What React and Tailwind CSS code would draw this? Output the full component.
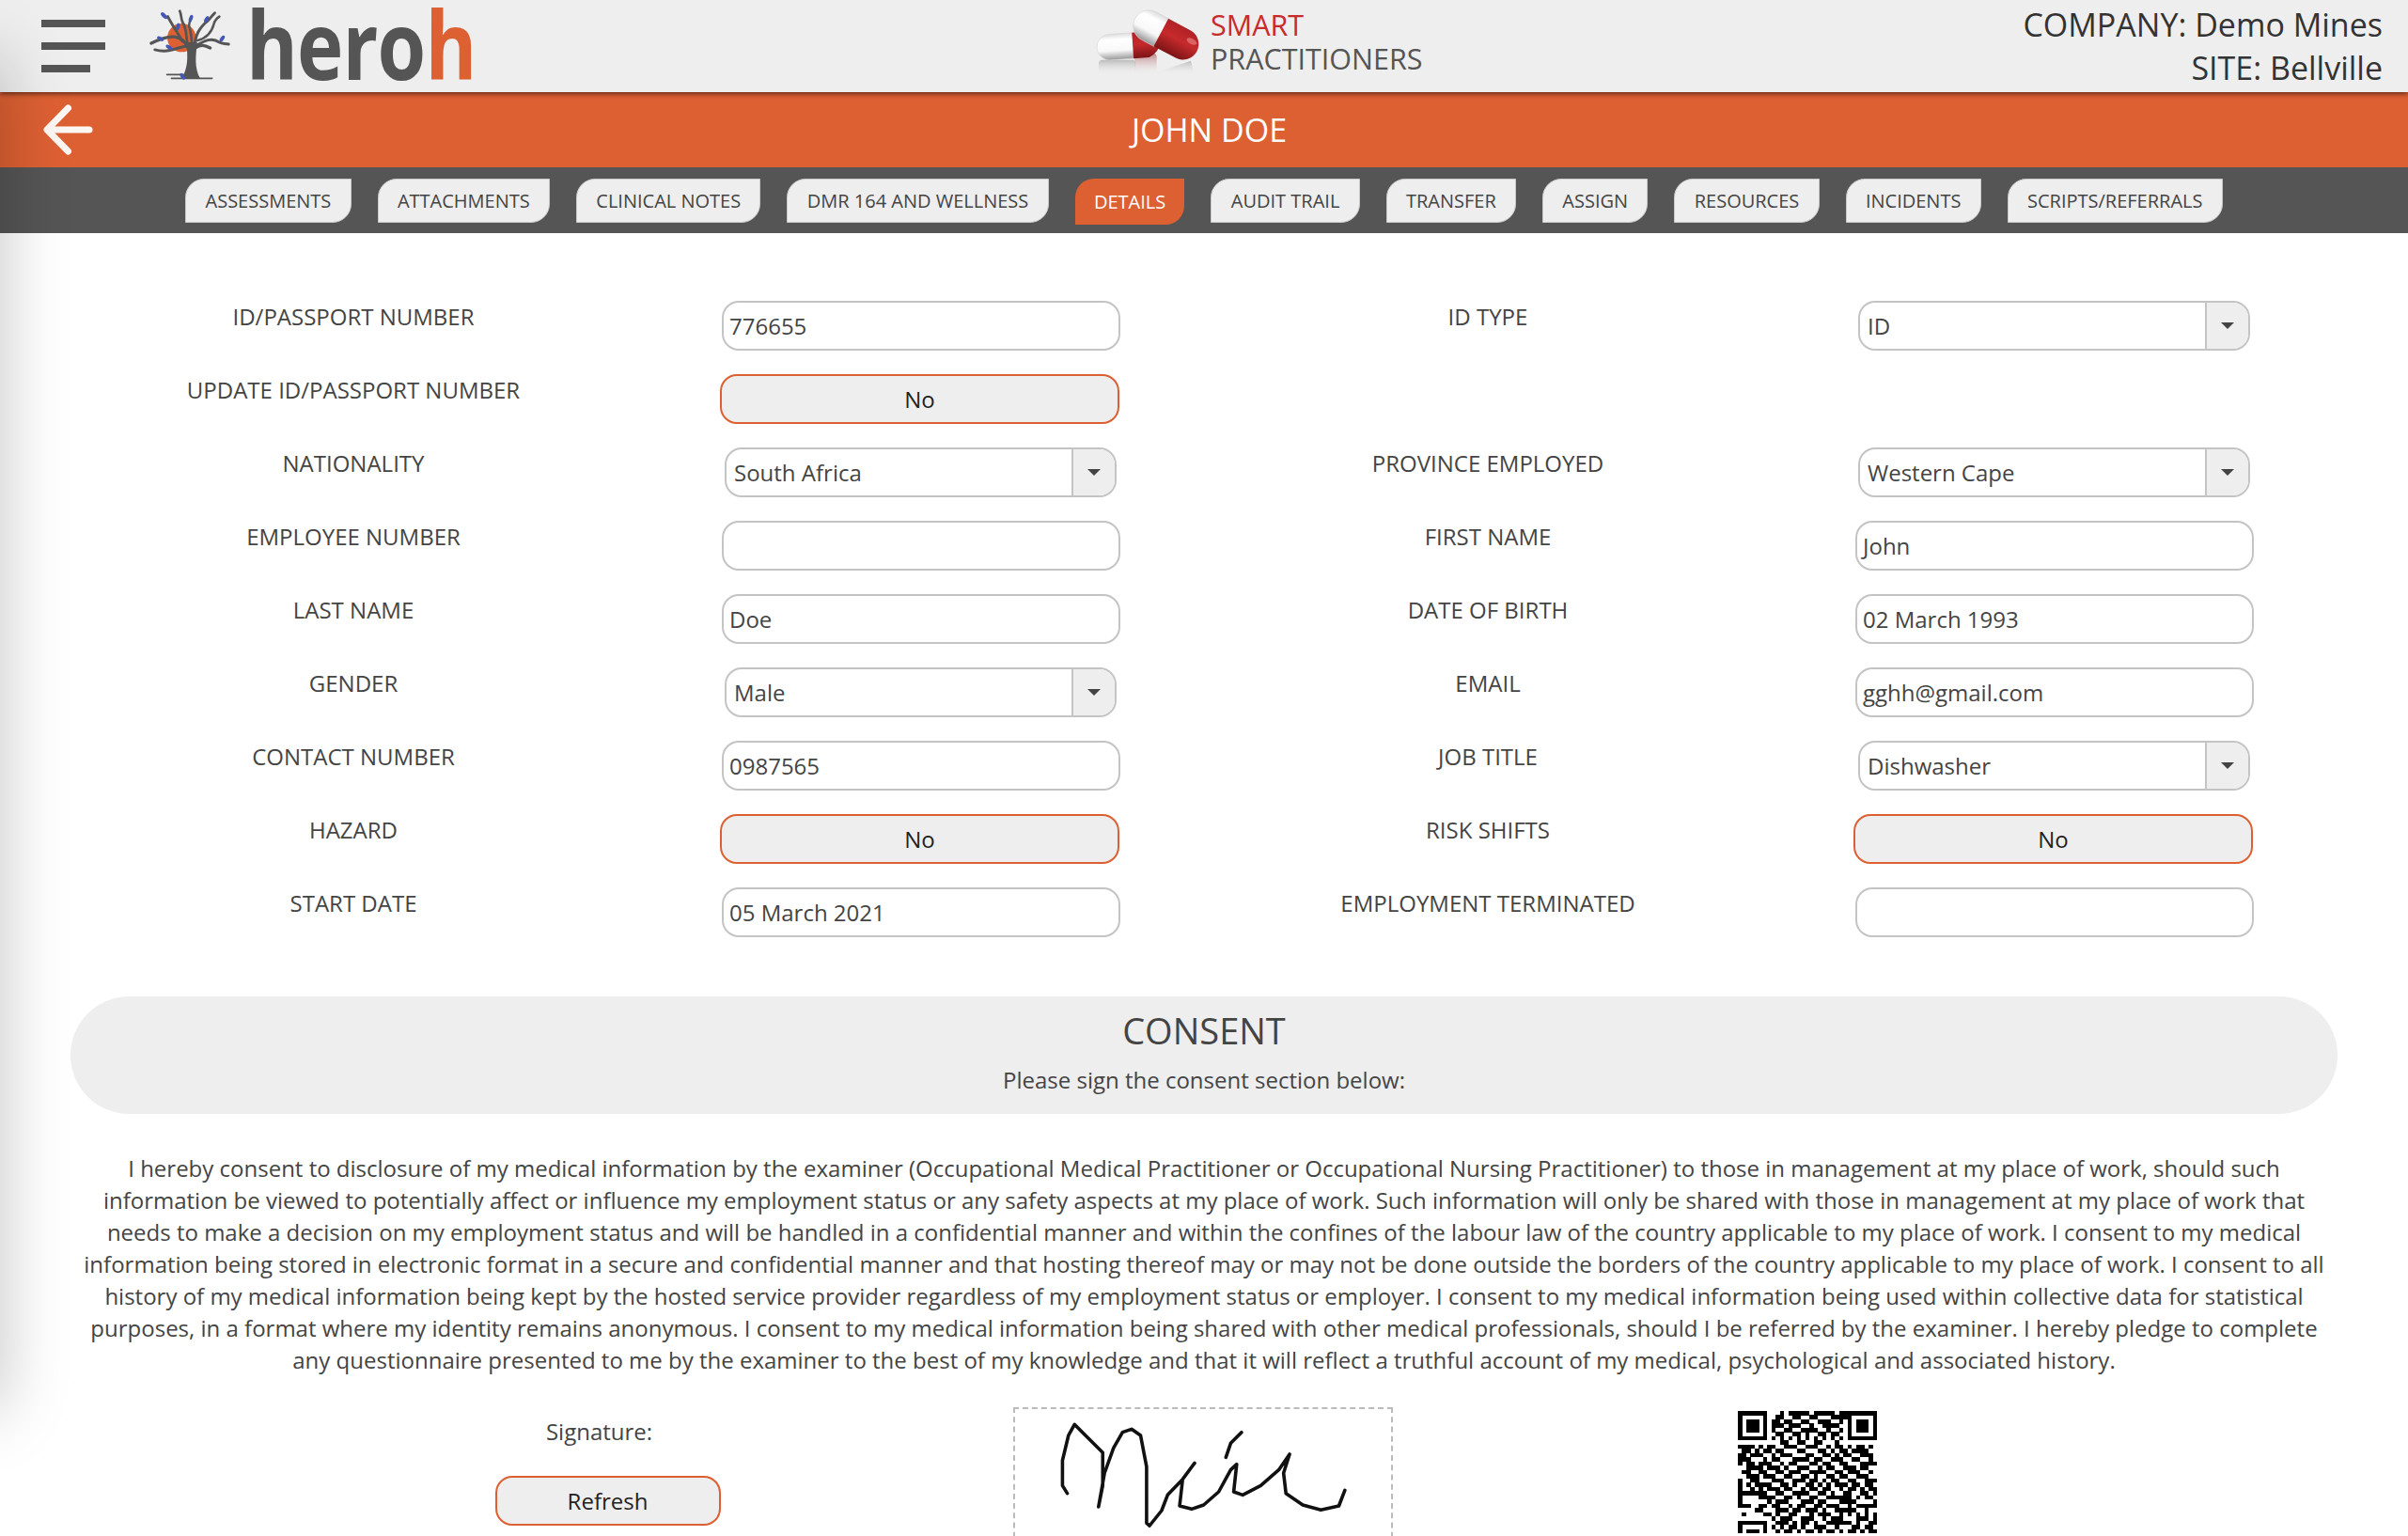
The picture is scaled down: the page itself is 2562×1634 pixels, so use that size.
const ORANGE = '#DD6033';

const tabs = ['ASSESSMENTS','ATTACHMENTS','CLINICAL NOTES','DMR 164 AND WELLNESS','DETAILS','AUDIT TRAIL','TRANSFER','ASSIGN','RESOURCES','INCIDENTS','SCRIPTS/REFERRALS'];

const rows = [
  ['ID/PASSPORT NUMBER',{t:'input',v:'776655'},'ID TYPE',{t:'select',v:'ID'}],
  ['UPDATE ID/PASSPORT NUMBER',{t:'btn',v:'No'},'',null],
  ['NATIONALITY',{t:'select',v:'South Africa'},'PROVINCE EMPLOYED',{t:'select',v:'Western Cape'}],
  ['EMPLOYEE NUMBER',{t:'input',v:''},'FIRST NAME',{t:'input',v:'John'}],
  ['LAST NAME',{t:'input',v:'Doe'},'DATE OF BIRTH',{t:'input',v:'02 March 1993'}],
  ['GENDER',{t:'select',v:'Male'},'EMAIL',{t:'input',v:'gghh@gmail.com'}],
  ['CONTACT NUMBER',{t:'input',v:'0987565'},'JOB TITLE',{t:'select',v:'Dishwasher'}],
  ['HAZARD',{t:'btn',v:'No'},'RISK SHIFTS',{t:'btn',v:'No'}],
  ['START DATE',{t:'input',v:'05 March 2021'},'EMPLOYMENT TERMINATED',{t:'input',v:''}],
];

const consent = [
  'I hereby consent to disclosure of my medical information by the examiner (Occupational Medical Practitioner or Occupational Nursing Practitioner) to those in management at my place of work, should such',
  'information be viewed to potentially affect or influence my employment status or any safety aspects at my place of work. Such information will only be shared with those in management at my place of work that',
  'needs to make a decision on my employment status and will be handled in a confidential manner and within the confines of the labour law of the country applicable to my place of work. I consent to my medical',
  'information being stored in electronic format in a secure and confidential manner and that hosting thereof may or may not be done outside the borders of the country applicable to my place of work. I consent to all',
  'history of my medical information being kept by the hosted service provider regardless of my employment status or employer. I consent to my medical information being used within collective data for statistical',
  'purposes, in a format where my identity remains anonymous. I consent to my medical information being shared with other medical professionals, should I be referred by the examiner. I hereby pledge to complete',
  'any questionnaire presented to me by the examiner to the best of my knowledge and that it will reflect a truthful account of my medical, psychological and associated history.',
];

const qr = [
  '111111100010111110111110111111111'.slice(0,33),
  '100000100110011001100011110100000'.slice(0,26) + '1000001',
  '101110101101100110011100100101110'.slice(0,26) + '1011101',
  '101110101110111001001111000101110'.slice(0,26) + '1011101',
  '101110101001100111100100100101110'.slice(0,26) + '1011101',
  '100000100110011010011011000100000'.slice(0,26) + '1000001',
  '111111101010101010101010100111111'.slice(0,26) + '1111111',
  '000000000011001100110001000000000',
  '111101011001110011100101101011010',
  '011010110110001100011010110111100',
  '110111001011100011001101011001110',
  '111000101100011110110011100110010',
  '101101110010110001101100110001111',
  '001111011101001110010110011101100',
  '011001100110111001111001101110010',
  '001110111001100110100110110011100',
  '100110001110011101101011001100111',
  '101011110011010011010101110110110',
  '100101011101100101101100101101011',
  '111111100110011110011010011001101',
  '100001111001101001100111111010110',
  '100000010111000111011000111100001',
  '111001101100101100110111001011111',
  '000011000111011011101001111100100',
  '010000110100110001011100101010101',
  '000000001011100111001011100011101',
  '111111100111010110100111111010011',
  '100000101010110100111001000110110',
  '101110100101101011010110101101011',
];

function Tree(){
  return (
    <svg viewBox="0 0 130 100" className="w-[130px] h-[98px] shrink-0" fill="none">
      <circle cx="53" cy="41" r="15.5" fill={ORANGE}/>
      <g stroke="#555" strokeLinecap="round" strokeLinejoin="round" fill="none">
        <path d="M61 54C58 46 52 41 45 40C38 39 28 43 20 47" strokeWidth="3.4"/>
        <path d="M54 45C47 33 42 26 38 18" strokeWidth="3"/>
        <path d="M60 50C57 42 60 34 54 24C52 20 53 16 51 12" strokeWidth="2.8"/>
        <path d="M64 50C64 40 63 34 61 28C61 24 63 22 64 18" strokeWidth="2.6"/>
        <path d="M67 50C68 38 72 30 82 22C84 20 86 17 89 14" strokeWidth="3"/>
        <path d="M70 44C78 42 85 38 88 26C89 22 91 20 94 18" strokeWidth="2.6"/>
        <path d="M68 50C78 44 86 40 94 46C97 48 100 47 104 48" strokeWidth="3"/>
        <path d="M58 50C46 52 38 58 24 54" strokeWidth="3"/>
        <path d="M68 52C74 48 78 49 84 52" strokeWidth="3.4"/>
        <path d="M37 81H55" strokeWidth="1.6"/>
        <path d="M42 85H86" strokeWidth="1.8"/>
      </g>
      <path d="M58 46L70 46C68 62 67 74 73 85H53C60 74 60 62 58 46Z" fill="#555"/>
      <g fill="#4457b5">
        <ellipse cx="34" cy="17" rx="2.2" ry="4.5" transform="rotate(-45 34 17)"/>
        <ellipse cx="49" cy="29" rx="2" ry="4" transform="rotate(15 49 29)"/>
        <ellipse cx="30" cy="42" rx="2" ry="4" transform="rotate(-60 30 42)"/>
        <ellipse cx="39" cy="51.500" rx="2" ry="4" transform="rotate(-60 39 51)"/>
        <ellipse cx="63" cy="20" rx="2" ry="4" transform="rotate(20 63 20)"/>
        <ellipse cx="80" cy="21" rx="2" ry="4" transform="rotate(30 80 21)"/>
        <ellipse cx="97" cy="42" rx="2" ry="4" transform="rotate(35 97 42)"/>
        <ellipse cx="54" cy="83" rx="2" ry="4" transform="rotate(-35 54 83)"/>
      </g>
    </svg>
  );
}

function Pills(){
  return (
    <svg viewBox="0 0 130 100" className="w-[130px] h-[98px] shrink-0">
      <defs>
        <linearGradient id="w" x1="0" y1="0" x2="0" y2="1">
          <stop offset="0" stopColor="#dcdcdc"/><stop offset="0.22" stopColor="#ffffff"/><stop offset="0.65" stopColor="#f8f8f8"/><stop offset="1" stopColor="#989898"/>
        </linearGradient>
        <linearGradient id="r" x1="0" y1="0" x2="0" y2="1">
          <stop offset="0" stopColor="#b02125"/><stop offset="0.45" stopColor="#c62a2c"/><stop offset="1" stopColor="#7c1416"/>
        </linearGradient>
        <linearGradient id="fade" x1="0" y1="0" x2="0" y2="1">
          <stop offset="0" stopColor="#999" stopOpacity="0.6"/><stop offset="1" stopColor="#eee" stopOpacity="0"/>
        </linearGradient>
        <linearGradient id="fader" x1="0" y1="0" x2="0" y2="1">
          <stop offset="0" stopColor="#a55" stopOpacity="0.7"/><stop offset="1" stopColor="#eee" stopOpacity="0"/>
        </linearGradient>
      </defs>
      <rect x="18" y="65" width="40" height="16" rx="4" fill="url(#fade)"/>
      <rect x="57" y="58" width="24" height="23" rx="4" fill="url(#fader)"/>
      <path d="M80 79L118 66L122 81H82Z" fill="url(#fade)"/>
      <g transform="rotate(-4 47 50)">
        <path d="M30 36H60V64H30A14 14 0 0 1 30 36Z" fill="url(#w)" stroke="#d4d4d4" strokeWidth="0.6"/>
        <path d="M55 36H72Q84 42 84 50Q84 58 72 64H55Z" fill="url(#r)"/>
      </g>
      <g transform="rotate(28 91 38)">
        <path d="M70 21H86V55H70A17 17 0 0 1 70 21Z" fill="url(#w)" stroke="#d4d4d4" strokeWidth="0.6"/>
        <path d="M85 21H112A17 17 0 0 1 112 55H85Z" fill="url(#r)"/>
        <ellipse cx="119" cy="31" rx="6" ry="3" fill="#e88" opacity="0.6"/>
      </g>
    </svg>
  );
}

function Field({f}){
  if(!f) return <div className="h-[53px]"/>;
  if(f.t==='input') return (
    <div className="h-[53px] border-2 border-[#c4c4c4] rounded-[18px] bg-white pl-[6px] flex items-center text-[24px] text-[#444]">{f.v}</div>
  );
  if(f.t==='btn') return (
    <div className="h-[53px] -ml-[2px] mr-[1px] border-2 border-[#DD6033] rounded-[18px] bg-[#eeeeee] flex items-center justify-center text-[24px] text-[#222]">{f.v}</div>
  );
  return (
    <div className="h-[53px] ml-[3px] mr-[4px] border-2 border-[#c4c4c4] rounded-[18px] bg-white overflow-hidden flex items-stretch text-[24px] text-[#444]">
      <div className="flex-1 pl-[8px] flex items-center">{f.v}</div>
      <div className="w-[46px] bg-[#eeeeee] border-l-2 border-[#c4c4c4] flex items-center justify-center">
        <span className="w-0 h-0 border-l-[7px] border-r-[7px] border-t-[7px] border-l-transparent border-r-transparent border-t-[#444]"/>
      </div>
    </div>
  );
}

function Label({children, extra}){
  return <div className={"text-center text-[24px] text-[#444] leading-[34px] " + (extra||'')}>{children}</div>;
}

export default function App(){
  return (
    <div className="relative w-[2562px] h-[1634px] overflow-hidden bg-white font-['Open_Sans',sans-serif]">
      <header className="relative z-10 h-[98px] bg-[#eeeeee] flex items-center shadow-[0_2px_5px_rgba(0,0,0,0.55)]">
        <div className="w-[1150px] h-[98px] shrink-0 flex items-center">
          <div className="ml-[44px] w-[68px] flex flex-col gap-[16px]">
            <div className="h-[8px] bg-[#555] w-full"/>
            <div className="h-[8px] bg-[#555] w-full"/>
            <div className="h-[8px] bg-[#555] w-[52px]"/>
          </div>
          <div className="ml-[28px] w-[122px] flex"><Tree/></div>
          <div className="w-[300px] self-start origin-left scale-x-[0.835] text-[100px] leading-[92px] font-bold text-[#555] tracking-[-1px] whitespace-nowrap">
            hero<span className="text-[#DD6033]">h</span>
          </div>
        </div>
        <Pills/>
        <div className="ml-[8px] leading-[36px] text-[30.5px] font-medium -mt-[11px]">
          <div className="text-[#c92a2a]">SMART</div>
          <div className="text-[#555]">PRACTITIONERS</div>
        </div>
        <div className="flex-1 pr-[27px] text-right text-[34px] leading-[46px] text-[#333]">
          <div>COMPANY: Demo Mines</div>
          <div>SITE: Bellville</div>
        </div>
      </header>
      <div className="h-[80px] bg-[#DD6033] flex items-center relative">
        <svg viewBox="0 0 60 60" className="ml-[43px] w-[60px] h-[60px] shrink-0" fill="none" stroke="#fdf7f4" strokeWidth="7" strokeLinecap="round" strokeLinejoin="round">
          <path d="M52 30H8M29.500 7L7 30L29.500 53"/>
        </svg>
        <div className="flex-1 pr-[92px] text-center text-white text-[34px]">JOHN DOE</div>
      </div>
      <nav className="h-[70px] bg-[#555555] flex justify-center gap-[28px] pt-[12px]">
        {tabs.map(t => t==='DETAILS' ? (
          <div key={t} className="h-[49px] px-[20.3px] flex items-center text-[20px] bg-[#DD6033] text-white rounded-tl-[20px] rounded-br-[20px]">{t}</div>
        ) : (
          <div key={t} className="h-[47px] px-[20.3px] flex items-center text-[20px] bg-[#eeeeee] text-[#444] rounded-tl-[20px] rounded-br-[20px] border border-[#c9c9c9]">{t}</div>
        ))}
      </nav>
      <section className="pt-[72px] grid grid-cols-[768px_424px_782px_424px] gap-y-[25px]">
        {rows.map((r,i)=>[
          <Label key={i+'a'} extra="pr-[16px]">{r[0]}</Label>,
          <Field key={i+'b'} f={r[1]}/>,
          <Label key={i+'c'}>{r[2]}</Label>,
          <Field key={i+'d'} f={r[3]}/>,
        ])}
      </section>
      <section className="mt-[63px] ml-[75px] w-[2412px] h-[125px] rounded-full bg-[#eeeeee] flex flex-col items-center text-[#444]">
        <div className="text-[38px] leading-[50px] mt-[11px]">CONSENT</div>
        <div className="text-[24px] leading-[34px] mt-[11px]">Please sign the consent section below:</div>
      </section>
      <section className="mt-[41px] text-center text-[24px] leading-[34px] text-[#444] whitespace-nowrap">
        {consent.map((l,i)=><div key={i}>{l}</div>)}
      </section>
      <section className="mt-[33px] flex items-start">
        <div className="ml-[527px] w-[239px] shrink-0 flex flex-col items-center">
          <div className="text-[24px] leading-[34px] text-[#444] mt-[9px] -ml-[18px]">Signature:</div>
          <div className="mt-[30px] w-[240px] h-[53px] border-2 border-[#DD6033] rounded-[18px] bg-[#eeeeee] flex items-center justify-center text-[24px] text-[#222]">Refresh</div>
        </div>
        <div className="ml-[312px] w-[404px] h-[200px] shrink-0 border-2 border-dashed border-[#bbbbbb]">
          <svg viewBox="908 50 632 411" preserveAspectRatio="none" className="block -mt-[2px] -ml-[2px] w-[404px] h-[137px]" fill="none" stroke="#111" strokeLinecap="round" strokeLinejoin="round">
            <path vectorEffect="non-scaling-stroke" strokeWidth="3.6" d="M998 325L990 300L990 220L1000 140L1010 105L1057 195L1057 300L1050 368L1060 260L1075 180L1090 130L1105 120L1120 140L1130 240L1130 420L1135 428L1155 380L1165 330L1190 280L1210 228M1190 280L1185 365L1205 375L1225 362L1250 320L1270 250L1280 232L1275 320L1290 330L1320 300L1350 250L1368 200L1358 260L1362 325L1390 362L1420 378L1450 365L1460 315"/>
            <path vectorEffect="non-scaling-stroke" strokeWidth="3.6" d="M1288 130L1270 165L1262 210"/>
          </svg>
        </div>
        <svg viewBox="0 0 33 29" className="ml-[367px] mt-[4px] w-[148px] h-[130px] shrink-0" shapeRendering="crispEdges" preserveAspectRatio="none">
          {qr.flatMap((row,y)=>row.split('').map((c,x)=> c==='1' ? <rect key={x+'-'+y} x={x} y={y} width="1.02" height="1.02" fill="#000"/> : null))}
        </svg>
      </section>
      <div className="absolute -left-[60px] top-[60px] w-[60px] h-[1440px] shadow-[0_0_70px_rgba(0,0,0,0.25)] z-20 pointer-events-none"/>
    </div>
  );
}
